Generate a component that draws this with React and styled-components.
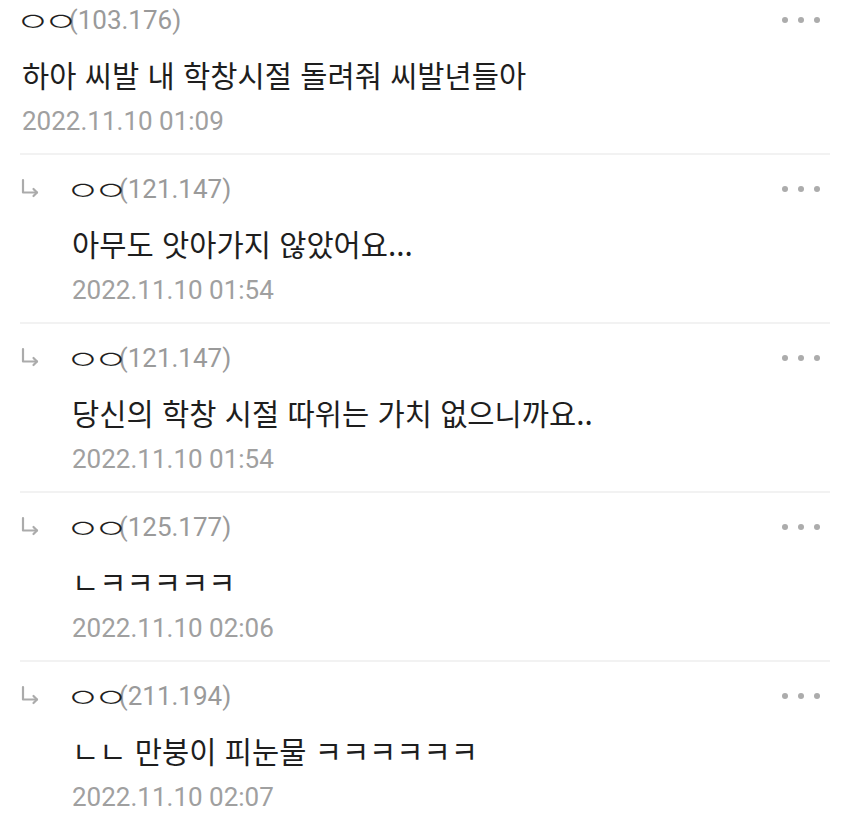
import styled, { createGlobalStyle } from "styled-components";

const comments = [
  { name: "ㅇㅇ", ip: "103.176", text: "하아 씨발 내 학창시절 돌려줘 씨발년들아", date: "2022.11.10 01:09" },
  { name: "ㅇㅇ", ip: "121.147", text: "아무도 앗아가지 않았어요...", date: "2022.11.10 01:54", reply: true },
  { name: "ㅇㅇ", ip: "121.147", text: "당신의 학창 시절 따위는 가치 없으니까요..", date: "2022.11.10 01:54", reply: true },
  { name: "ㅇㅇ", ip: "125.177", text: "ㄴㅋㅋㅋㅋㅋ", date: "2022.11.10 02:06", reply: true },
  { name: "ㅇㅇ", ip: "211.194", text: "ㄴㄴ 만붕이 피눈물 ㅋㅋㅋㅋㅋㅋ", date: "2022.11.10 02:07", reply: true },
];

const ReplyArrow = () => (
  <svg width="20" height="20" viewBox="0 0 20 20" fill="none" stroke="#ababab" strokeWidth="2.2" strokeLinecap="round" strokeLinejoin="round">
    <path d="M3 2v12.5h14" />
    <path d="M13.5 11l3.5 3.5-3.5 3.5" />
  </svg>
);

export default () => (
  <>
    <GlobalStyle />
    <List lang="ko">
      {comments.map((c, i) => (
        <Comment key={i} $first={i === 0}>
          {c.reply && (
            <Arrow>
              <ReplyArrow />
            </Arrow>
          )}
          <Body>
            <Head>
              <Name>
                <Nick>{c.name}</Nick>
                <Ip>({c.ip})</Ip>
              </Name>
              <More>
                <Dot />
                <Dot />
                <Dot />
              </More>
            </Head>
            <Text>{c.text}</Text>
            <Date>{c.date}</Date>
          </Body>
        </Comment>
      ))}
    </List>
  </>
);

const GlobalStyle = createGlobalStyle`
  body {
    margin: 0;
    background: #fff;
    font-family: Roboto, "Noto Sans CJK KR", sans-serif;
  }
`;

const List = styled.div`
  width: 850px;
  padding: 0 20px;
  box-sizing: border-box;
`;

const Comment = styled.div`
  display: flex;
  padding: ${p => (p.$first ? "0" : "14px")} 0 12px;
  border-bottom: 2px solid #f2f2f2;
`;

const Arrow = styled.div`
  width: 50px;
  flex-shrink: 0;
  height: 40px;
  display: flex;
  align-items: center;
  padding-bottom: 2px;
  box-sizing: border-box;
`;

const Body = styled.div`
  flex: 1;
  padding-left: 2px;
`;

const Head = styled.div`
  display: flex;
  align-items: center;
  justify-content: space-between;
  height: 40px;
`;

const Name = styled.div`
  display: flex;
  align-items: center;
  font-size: 26px;
  color: #222;
`;

const Nick = styled.span`
  display: inline-block;
  font-family: "Noto Sans CJK KR", sans-serif;
  font-size: 39px;
  font-weight: 300;
  line-height: 40px;
  letter-spacing: -8px;
  transform: scaleY(0.67);
  margin-left: -7px;
  margin-right: -2px;
  color: #1e1e1e;
`;

const Ip = styled.span`
  color: #9a9a9a;
`;

const More = styled.div`
  display: flex;
  gap: 10px;
  padding-right: 10px;
`;

const Dot = styled.span`
  width: 6px;
  height: 6px;
  border-radius: 50%;
  background: #acacac;
`;

const Text = styled.div`
  margin-top: 15px;
  font-family: "Noto Sans CJK KR", Roboto, sans-serif;
  font-size: 29.6px;
  line-height: 40px;
  color: #1e1e1e;
`;

const Date = styled.div`
  margin-top: 6px;
  font-size: 26px;
  line-height: 40px;
  color: #a0a0a0;
`;
